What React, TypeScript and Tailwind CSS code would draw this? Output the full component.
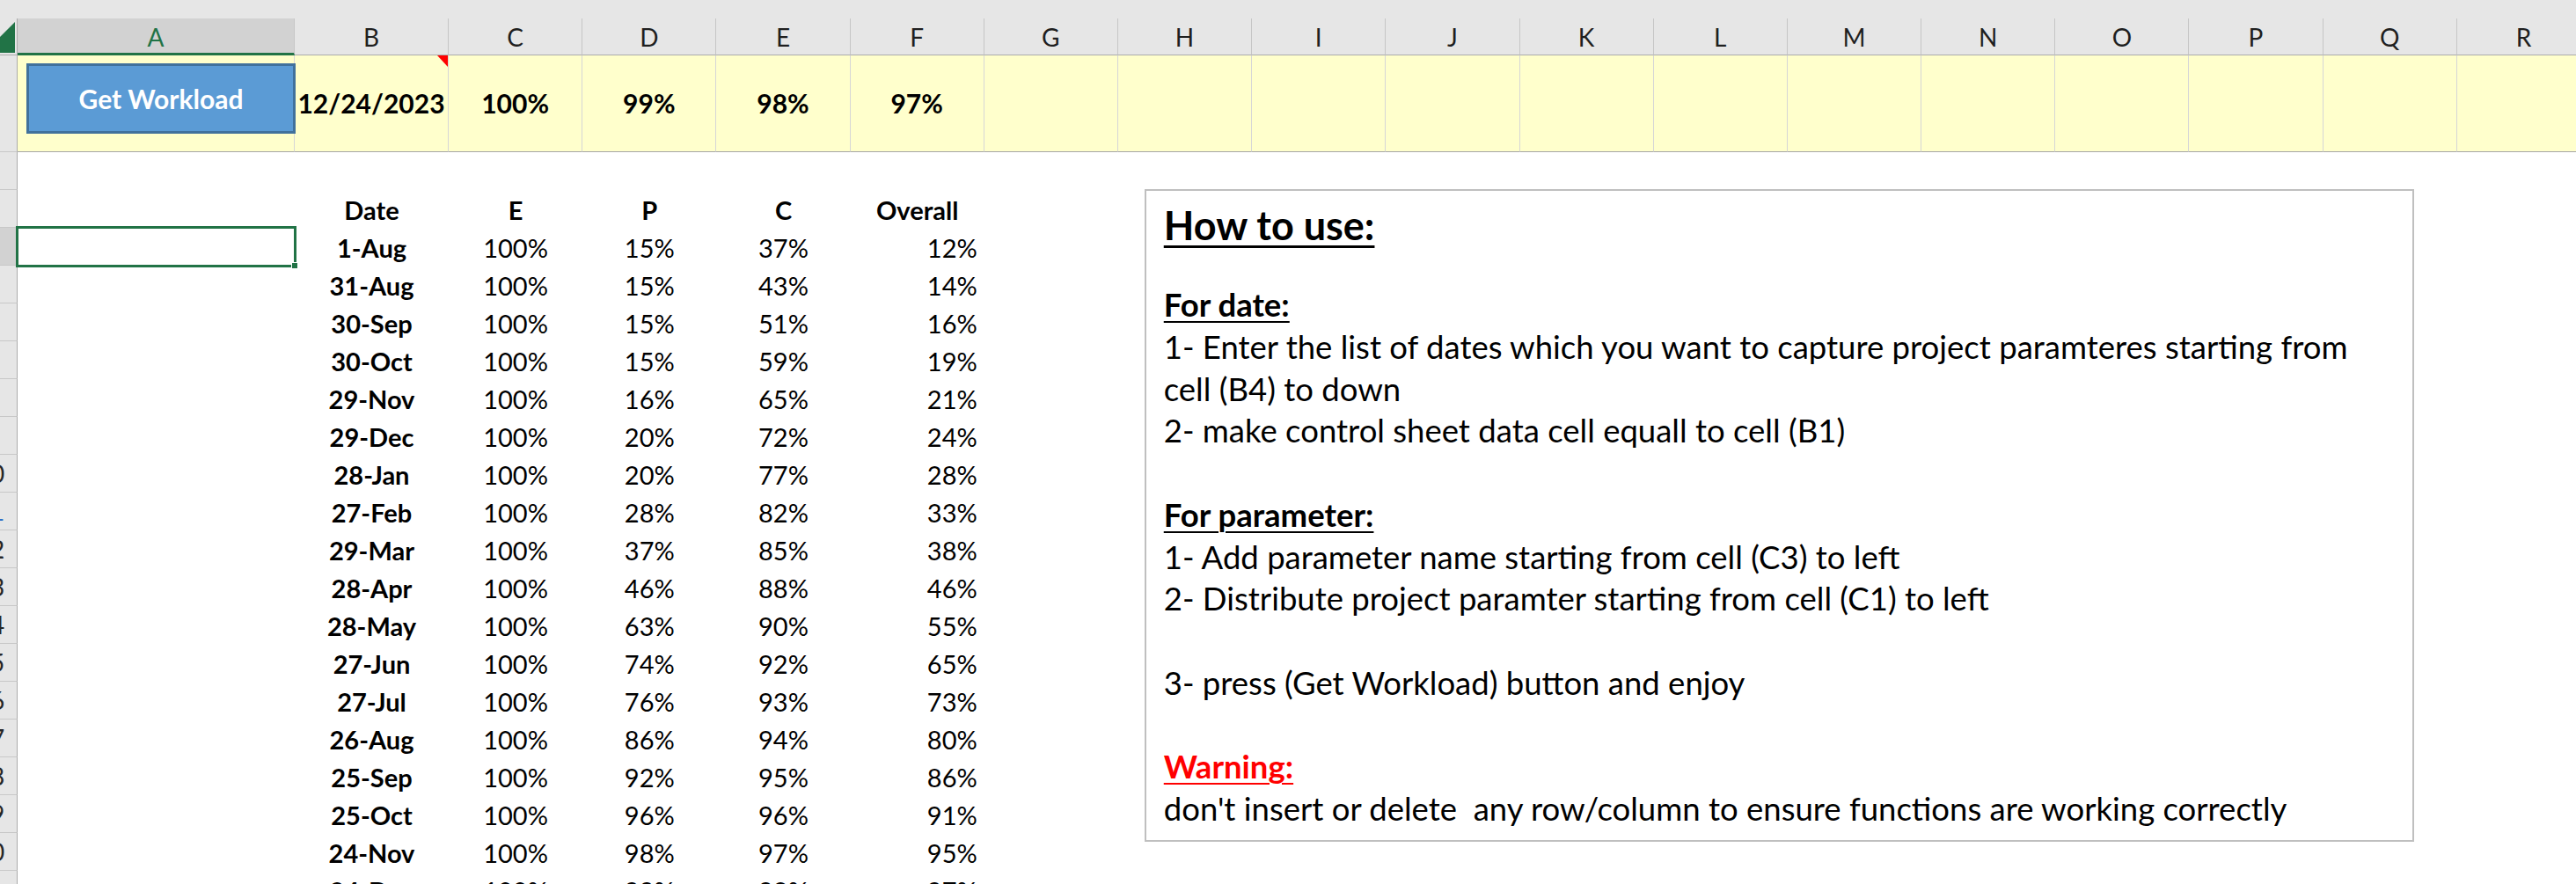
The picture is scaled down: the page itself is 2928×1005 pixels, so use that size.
import clsx from 'clsx';

const columns = ['A', 'B', 'C', 'D', 'E', 'F', 'G', 'H', 'I', 'J', 'K', 'L', 'M', 'N', 'O', 'P', 'Q', 'R'];

const topValues: Record<string, string> = {
  B: '12/24/2023',
  C: '100%',
  D: '99%',
  E: '98%',
  F: '97%',
};

const rows: [string, string, string, string, string][] = [
  ['1-Aug', '100%', '15%', '37%', '12%'],
  ['31-Aug', '100%', '15%', '43%', '14%'],
  ['30-Sep', '100%', '15%', '51%', '16%'],
  ['30-Oct', '100%', '15%', '59%', '19%'],
  ['29-Nov', '100%', '16%', '65%', '21%'],
  ['29-Dec', '100%', '20%', '72%', '24%'],
  ['28-Jan', '100%', '20%', '77%', '28%'],
  ['27-Feb', '100%', '28%', '82%', '33%'],
  ['29-Mar', '100%', '37%', '85%', '38%'],
  ['28-Apr', '100%', '46%', '88%', '46%'],
  ['28-May', '100%', '63%', '90%', '55%'],
  ['27-Jun', '100%', '74%', '92%', '65%'],
  ['27-Jul', '100%', '76%', '93%', '73%'],
  ['26-Aug', '100%', '86%', '94%', '80%'],
  ['25-Sep', '100%', '92%', '95%', '86%'],
  ['25-Oct', '100%', '96%', '96%', '91%'],
  ['24-Nov', '100%', '98%', '97%', '95%'],
  ['24-Dec', '100%', '99%', '98%', '97%'],
];

function colWidth(col: string) {
  if (col === 'A') return 'w-[315px]';
  if (col === 'B') return 'w-[175px]';
  return 'w-[152.2px]';
}

// row numbers sit centred in a header that is mostly scrolled off to the left
function RowHead({ n, selected, className }: { n: number; selected?: boolean; className?: string }) {
  return (
    <div
      className={clsx(
        'flex w-[20px] shrink-0 items-center overflow-hidden border-r border-b border-r-[#ababab] border-b-[#c8c8c8] text-[28px]',
        selected ? 'bg-[#d2d2d2]' : 'bg-[#e6e6e6]',
        n === 11 ? 'text-[#2f6fc6]' : 'text-[#262626]',
        className,
      )}
    >
      <div className="-ml-[42px] w-[62px] shrink-0 text-center">{n}</div>
    </div>
  );
}

function Cell({ children, className }: { children?: React.ReactNode; className?: string }) {
  return (
    <div className={clsx('h-[43px] shrink-0 pt-[2px] text-[29px] leading-[41px] text-black', className)}>
      {children}
    </div>
  );
}

function InstructionLine({ children, className }: { children?: React.ReactNode; className?: string }) {
  return <div className={clsx('h-[47.75px] whitespace-pre leading-[47.75px]', className)}>{children}</div>;
}

export default function App() {
  const lowerRows = Array.from({ length: 20 }, (_, i) => i + 2);

  return (
    <div className="h-[1005px] w-[2928px] overflow-hidden bg-white font-['Lato',sans-serif]">
      {/* top strip */}
      <div className="h-[21px] bg-[#e6e6e6]" />

      {/* column headers */}
      <div className="flex h-[42px] bg-[#e6e6e6]">
        <div className="relative w-[20px] shrink-0 border-r border-b border-[#ababab]">
          <svg width="20" height="41" className="absolute top-0 left-0">
            <polygon points="17,4 17,39 -18,39" fill="#217346" />
          </svg>
        </div>
        {columns.map((c) => (
          <div
            key={c}
            className={clsx(
              colWidth(c),
              'flex shrink-0 items-center justify-center border-r border-r-[#c6c6c6] text-[28px]',
              c === 'A'
                ? 'border-b-[3px] border-b-[#217346] bg-[#d2d2d2] pt-[2px] text-[#217346]'
                : 'border-b border-b-[#ababab] text-[#1f1f1f]',
            )}
          >
            {c}
          </div>
        ))}
      </div>

      {/* row 1 */}
      <div className="flex h-[110px]">
        <RowHead n={1} />
        {columns.map((c) => (
          <div
            key={c}
            className={clsx(
              colWidth(c),
              'relative flex shrink-0 items-center justify-center border-r border-b border-r-[#d6d6d6] border-b-[#a6a6a6] bg-[#ffffcc] text-[30px] font-bold text-black',
              c === 'A' && 'z-10 items-start justify-start',
            )}
          >
            {c === 'A' && (
              <div className="mt-[9px] ml-[10px] flex h-[80px] w-[306px] shrink-0 items-center justify-center border-[3px] border-[#41719c] bg-[#5b9bd5] text-[30px] font-bold text-white">
                Get Workload
              </div>
            )}
            {topValues[c]}
            {c === 'B' && (
              <svg width="12" height="13" className="absolute top-0 right-0">
                <polygon points="0,0 12,0 12,13" fill="#ff0000" />
              </svg>
            )}
          </div>
        ))}
      </div>

      {/* lower sheet */}
      <div className="flex">
        <div className="flex shrink-0 flex-col">
          {lowerRows.map((n) => (
            <RowHead key={n} n={n} selected={n === 4} className="h-[43px]" />
          ))}
        </div>

        <div className="flex shrink-0 flex-col">
          {lowerRows.map((n) => {
            const data = n === 3 ? ['Date', 'E', 'P', 'C', 'Overall'] : n >= 4 ? rows[n - 4] : null;
            const head = n === 3;
            return (
              <div key={n} className="flex">
                <div className="relative w-[315px] shrink-0">
                  <Cell />
                  {n === 4 && (
                    <div className="absolute -inset-[2px] z-10 border-[3px] border-[#217346]">
                      <div className="absolute -right-[5px] -bottom-[5px] h-[8px] w-[8px] border border-white bg-[#217346]" />
                    </div>
                  )}
                </div>
                <Cell className="w-[175px] text-center font-bold">{data?.[0]}</Cell>
                <Cell className={clsx('w-[152.2px] text-center', head && 'font-bold')}>{data?.[1]}</Cell>
                <Cell className={clsx('w-[152.2px] text-center', head && 'font-bold')}>{data?.[2]}</Cell>
                <Cell className={clsx('w-[152.2px] text-center', head && 'font-bold')}>{data?.[3]}</Cell>
                <Cell className={clsx('w-[152.2px]', head ? 'text-center font-bold' : 'pr-[8px] text-right')}>
                  {data?.[4]}
                </Cell>
              </div>
            );
          })}
        </div>

        {/* how to use box */}
        <div className="mt-[42px] ml-[182px] h-[742px] w-[1443px] shrink-0 border-2 border-[#bfbfbf] pt-[9px] pl-[20px] text-[36.5px] text-black">
          <div className="mb-[37px] h-[60px] text-[45px] leading-[60px] font-bold underline decoration-[3px] underline-offset-[6px]">
            How to use:
          </div>
          <InstructionLine className="font-bold underline decoration-2 underline-offset-[5px]">For date:</InstructionLine>
          <InstructionLine>1- Enter the list of dates which you want to capture project paramteres starting from</InstructionLine>
          <InstructionLine>cell (B4) to down</InstructionLine>
          <InstructionLine>2- make control sheet data cell equall to cell (B1)</InstructionLine>
          <InstructionLine />
          <InstructionLine className="font-bold underline decoration-2 underline-offset-[5px]">For parameter:</InstructionLine>
          <InstructionLine>1- Add parameter name starting from cell (C3) to left</InstructionLine>
          <InstructionLine>2- Distribute project paramter starting from cell (C1) to left</InstructionLine>
          <InstructionLine />
          <InstructionLine>3- press (Get Workload) button and enjoy</InstructionLine>
          <InstructionLine />
          <InstructionLine className="font-bold text-[#ff0000] underline decoration-2 underline-offset-[5px]">
            Warning:
          </InstructionLine>
          <InstructionLine>don't insert or delete  any row/column to ensure functions are working correctly</InstructionLine>
        </div>
      </div>
    </div>
  );
}
